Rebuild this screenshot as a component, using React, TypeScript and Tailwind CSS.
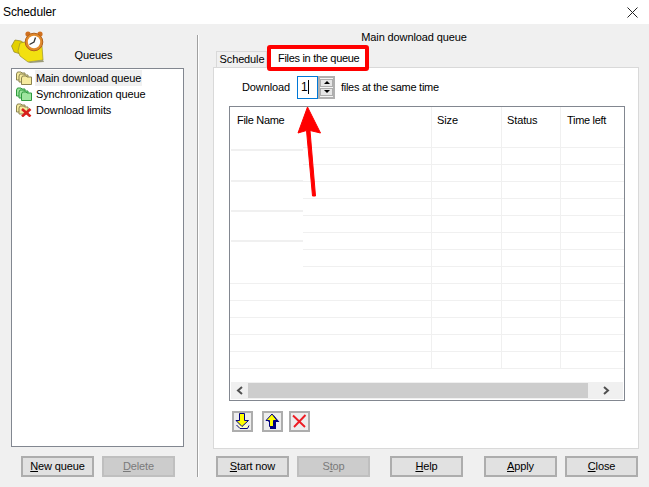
import React from "react";

const font = { fontFamily: '"Liberation Sans", Arial, sans-serif' };

function Btn({ children, disabled, w = "w-[73px]" }: { children: React.ReactNode; disabled?: boolean; w?: string }) {
  return (
    <div
      className={`${w} h-[21px] flex items-center justify-center border-2 text-[11px] leading-none ${
        disabled ? "bg-[#cccccc] border-[#bfbfbf] text-[#7a7a7a]" : "bg-[#e1e1e1] border-[#adadad] text-black"
      }`}
    >
      <span>{children}</span>
    </div>
  );
}

function Folders({ fill, edge }: { fill: string; edge: string }) {
  return (
    <svg width="16" height="14" viewBox="0 0 16 14" className="shrink-0">
      <path d="M0.5 3 L1.5 1 H5 L6 2 H9 V9 H0.5 Z" fill={fill} stroke={edge} />
      <path d="M3 5 L4 3 H7.5 L8.5 4 H12 V11 H3 Z" fill={fill} stroke={edge} />
      <path d="M5.5 7 L6.5 5 H10 L11 6 H15.5 V13.5 H5.5 Z" fill={fill} stroke={edge} />
    </svg>
  );
}

function LimitsIcon() {
  return (
    <svg width="16" height="14" viewBox="0 0 16 14" className="shrink-0">
      <path d="M0.5 3 L1.5 1 H5 L6 2 H9 V9 H0.5 Z" fill="#f6eb9e" stroke="#8a8350" />
      <path d="M3 5 L4 3 H7.5 L8.5 4 H12 V11 H3 Z" fill="#f6eb9e" stroke="#8a8350" />
      <path d="M6 6 L14.5 13.5 M14.5 6 L6 13.5" stroke="#d8201c" strokeWidth="2.6" />
    </svg>
  );
}

function Clock() {
  return (
    <svg width="34" height="32" viewBox="0 0 34 32" className="shrink-0">
      <path d="M0.5 15 L4 9 L10 10 L13 12 L13 24 L3 21 Z" fill="#e3d000" stroke="#8f8420" strokeWidth="0.7" />
      <path d="M7 20 L9 12 L14 11 L22 14 L31 15 L32 29 L17 31 L9 25 Z" fill="#f2e010" stroke="#99902a" strokeWidth="0.7" />
      <path d="M17 31 L32 29 L33 31 L19 32 Z" fill="#9a9a78" />
      <circle cx="17" cy="3" r="2.6" fill="#d0701f" />
      <circle cx="29" cy="3" r="2.6" fill="#d0701f" />
      <circle cx="23" cy="11" r="8.8" fill="#e08a2c" stroke="#b0601c" />
      <circle cx="23" cy="11" r="6.2" fill="#ffffff" />
      <path d="M24.5 6.5 L23 11 L18.5 13.5" stroke="#333333" strokeWidth="1.3" fill="none" />
    </svg>
  );
}

function ListItem({ icon, label, selected }: { icon: React.ReactNode; label: string; selected?: boolean }) {
  return (
    <div className="h-[16px] flex items-center gap-[3px] pl-[4px]">
      {icon}
      <span className={`text-[11px] leading-[16px] px-[1px] ${selected ? "bg-[#f0f0f0]" : ""}`}>{label}</span>
    </div>
  );
}

function IconBtn({ children, className = "" }: { children: React.ReactNode; className?: string }) {
  return (
    <div className={`w-[21px] h-[21px] bg-[#ededed] border-2 border-[#adadad] flex items-center justify-center ${className}`}>
      {children}
    </div>
  );
}

function ArrowDown() {
  return (
    <svg width="15" height="17" viewBox="0 0 15 17">
      <path d="M1.5 12 L5 15.5 H12.5 L14 12.5" fill="#ffffc0" stroke="#000080" strokeWidth="1" />
      <path d="M4.5 0.5 H9.5 V7.5 H13.5 L7 13.5 L1 7.5 H4.5 Z" fill="#ffff00" stroke="#000080" strokeWidth="1" />
    </svg>
  );
}

function ArrowUp() {
  return (
    <svg width="15" height="17" viewBox="0 0 15 17">
      <path d="M5 16 H11 V9 H14.5 L8.5 2 L3 9 H5 Z" fill="#000080" />
      <path d="M4.5 13.5 H8.5 V7.5 H12 L7 1 L1 7.5 H4.5 Z" fill="#ffff00" stroke="#000080" strokeWidth="1" />
    </svg>
  );
}

function CrossIcon() {
  return (
    <svg width="15" height="15" viewBox="0 0 15 15">
      <path d="M1 1.5 L13 13 M13.5 1 L2 13" stroke="#ee1c24" strokeWidth="1.9" />
    </svg>
  );
}

export default function App() {
  const rows = Array.from({ length: 14 });
  return (
    <div style={font} className="w-[649px] h-[487px] relative overflow-hidden flex flex-col bg-[#f0f0f0] text-black text-[11px] tracking-[-0.12px]">
      <div className="h-[24px] bg-white flex items-center justify-between pl-[3px] pr-[11px]">
        <span className="text-[12px]">Scheduler</span>
        <svg width="11" height="11" viewBox="0 0 11 11">
          <path d="M0.5 0.5 L10.5 10.5 M10.5 0.5 L0.5 10.5" stroke="#222" strokeWidth="1" />
        </svg>
      </div>
      <div className="flex-1 flex">
        {/* left column */}
        <div className="w-[197px] pl-[11px] flex flex-col">
          <div className="h-[44px] w-[173px] relative flex items-end justify-center pb-[6px]">
            <div className="absolute left-0 top-[7px]">
              <Clock />
            </div>
            <span className="leading-[14px] mr-[8px]">Queues</span>
          </div>
          <div className="w-[173px] h-[379px] bg-white border border-[#828790] pt-[1px]">
            <ListItem selected icon={<Folders fill="#f6eb9e" edge="#8a8350" />} label="Main download queue" />
            <ListItem icon={<Folders fill="#9fe59f" edge="#2f9a3f" />} label="Synchronization queue" />
            <ListItem icon={<LimitsIcon />} label="Download limits" />
          </div>
          <div className="mt-[9px] flex gap-[8px] pl-[10px]">
            <Btn><u>N</u>ew queue</Btn>
            <Btn disabled><u>D</u>elete</Btn>
          </div>
        </div>
        {/* divider */}
        <div className="w-[2px] h-[442px] mt-[11px] bg-[#a0a0a0] border-r border-white" />
        {/* right column */}
        <div className="w-[450px] pl-[14px] flex flex-col">
          <div className="h-[27px] w-[402px] pt-[5px] text-center">
            <span className="leading-[14px]">Main download queue</span>
          </div>
          <div className="h-[16px] flex pl-[3px]">
            <div className="w-[51px] h-[16px] pl-[1px] bg-[#f0f0f0] border border-b-0 border-[#d9d9d9] flex items-center justify-center leading-none whitespace-nowrap">
              Schedule
            </div>
            <div className="w-[102px] h-[18px] -mt-[2px] bg-white flex items-center pl-[11px] leading-none whitespace-nowrap tracking-[-0.3px]">
              Files in the queue
            </div>
          </div>
          <div className="w-[426px] h-[382px] bg-white border border-[#d9d9d9] px-[15px] flex flex-col">
            <div className="h-[38px] flex items-center">
              <span className="ml-[13px] w-[55px]">Download</span>
              <div className="w-[21px] h-[23px] border border-[#0078d7] flex items-center pl-[3px] text-[12px]">
                1<span className="w-[1px] h-[14px] bg-black ml-[0.5px]" />
              </div>
              <div className="w-[17px] h-[23px] border-2 border-[#b0b0b0] bg-[#f5f5f5] flex flex-col items-center justify-center gap-[1px]">
                <div className="w-[13px] h-[8px] bg-[#e6e6e6] border border-[#adadad] flex items-center justify-center">
                  <div className="border-x-[3px] border-x-transparent border-b-[3px] border-b-black" />
                </div>
                <div className="w-[13px] h-[8px] bg-[#e6e6e6] border border-[#adadad] flex items-center justify-center">
                  <div className="border-x-[3px] border-x-transparent border-t-[3px] border-t-black" />
                </div>
              </div>
              <span className="ml-[6px] tracking-[-0.28px]">files at the same time</span>
            </div>
            <div className="w-[396px] h-[295px] border border-[#828790] flex flex-col relative">
              <div className="h-[24px] flex shrink-0">
                <div className="w-[202px] border-r border-[#f0f0f0] pl-[7px] pt-[8px] leading-none tracking-[-0.3px]">File Name</div>
                <div className="w-[70px] border-r border-[#f0f0f0] pl-[5px] pt-[8px] leading-none">Size</div>
                <div className="w-[59px] border-r border-[#f0f0f0] pl-[5px] pt-[8px] leading-none">Status</div>
                <div className="flex-1 pl-[6px] pt-[8px] leading-none tracking-[-0.3px]">Time left</div>
              </div>
              <div className="flex-1 overflow-hidden">
                {rows.map((_, i) => (
                  <div key={i} className="h-[17px] flex border-b border-[#f0f0f0]">
                    <div className="w-[202px] border-r border-[#f0f0f0]" />
                    <div className="w-[70px] border-r border-[#f0f0f0]" />
                    <div className="w-[59px] border-r border-[#f0f0f0]" />
                    <div className="flex-1" />
                  </div>
                ))}
              </div>
              <div className="absolute left-0 top-[25px] w-[73px] h-[135px] bg-white">
                <div className="h-[19px] border-b-2 border-[#f0f0f0] ml-[1px]" />
                <div className="h-[31px] border-b-2 border-[#f0f0f0] ml-[1px]" />
                <div className="h-[30px] border-b-2 border-[#f0f0f0] ml-[1px]" />
                <div className="h-[30px] border-b-2 border-[#f0f0f0] ml-[1px]" />
              </div>
              <div className="h-[17px] bg-[#f0f0f0] flex items-center shrink-0 mx-[1px] mb-[1px]">
                <div className="w-[17px] flex justify-center">
                  <svg width="8" height="9" viewBox="0 0 8 9"><path d="M6 1 L2 4.5 L6 8" stroke="#505050" strokeWidth="2" fill="none" /></svg>
                </div>
                <div className="w-[340px] h-[15px] bg-[#cdcdcd]" />
                <div className="flex-1 flex justify-center">
                  <svg width="8" height="9" viewBox="0 0 8 9"><path d="M2 1 L6 4.5 L2 8" stroke="#505050" strokeWidth="2" fill="none" /></svg>
                </div>
              </div>
            </div>
            <div className="mt-[10px] flex pl-[3px]">
              <IconBtn><ArrowDown /></IconBtn>
              <IconBtn className="ml-[9px]"><ArrowUp /></IconBtn>
              <IconBtn className="ml-[6px]"><CrossIcon /></IconBtn>
            </div>
          </div>
          <div className="mt-[7px] flex pl-[3px]">
            <Btn><u>S</u>tart now</Btn>
            <Btn disabled w="w-[73px] ml-[8px]">S<u>t</u>op</Btn>
            <Btn w="w-[73px] ml-[20px]"><u>H</u>elp</Btn>
            <Btn w="w-[73px] ml-[21px]"><u>A</u>pply</Btn>
            <Btn w="w-[73px] ml-[8px]"><u>C</u>lose</Btn>
          </div>
        </div>
      </div>
      {/* annotations */}
      <div className="absolute z-20 left-[267px] top-[45px] w-[102px] h-[26px] border-[4px] border-[#ff0000] rounded-[3px]" />
      <svg className="absolute z-20 left-[295px] top-[105px]" width="30" height="95" viewBox="0 0 30 95">
        <path d="M12.5 2 L25.5 28 L15 25.5 L20.5 91 L17.5 91 L11.5 25.5 L3 28 Z" fill="#ff0000" stroke="#ff0000" strokeLinejoin="round" />
      </svg>
    </div>
  );
}
